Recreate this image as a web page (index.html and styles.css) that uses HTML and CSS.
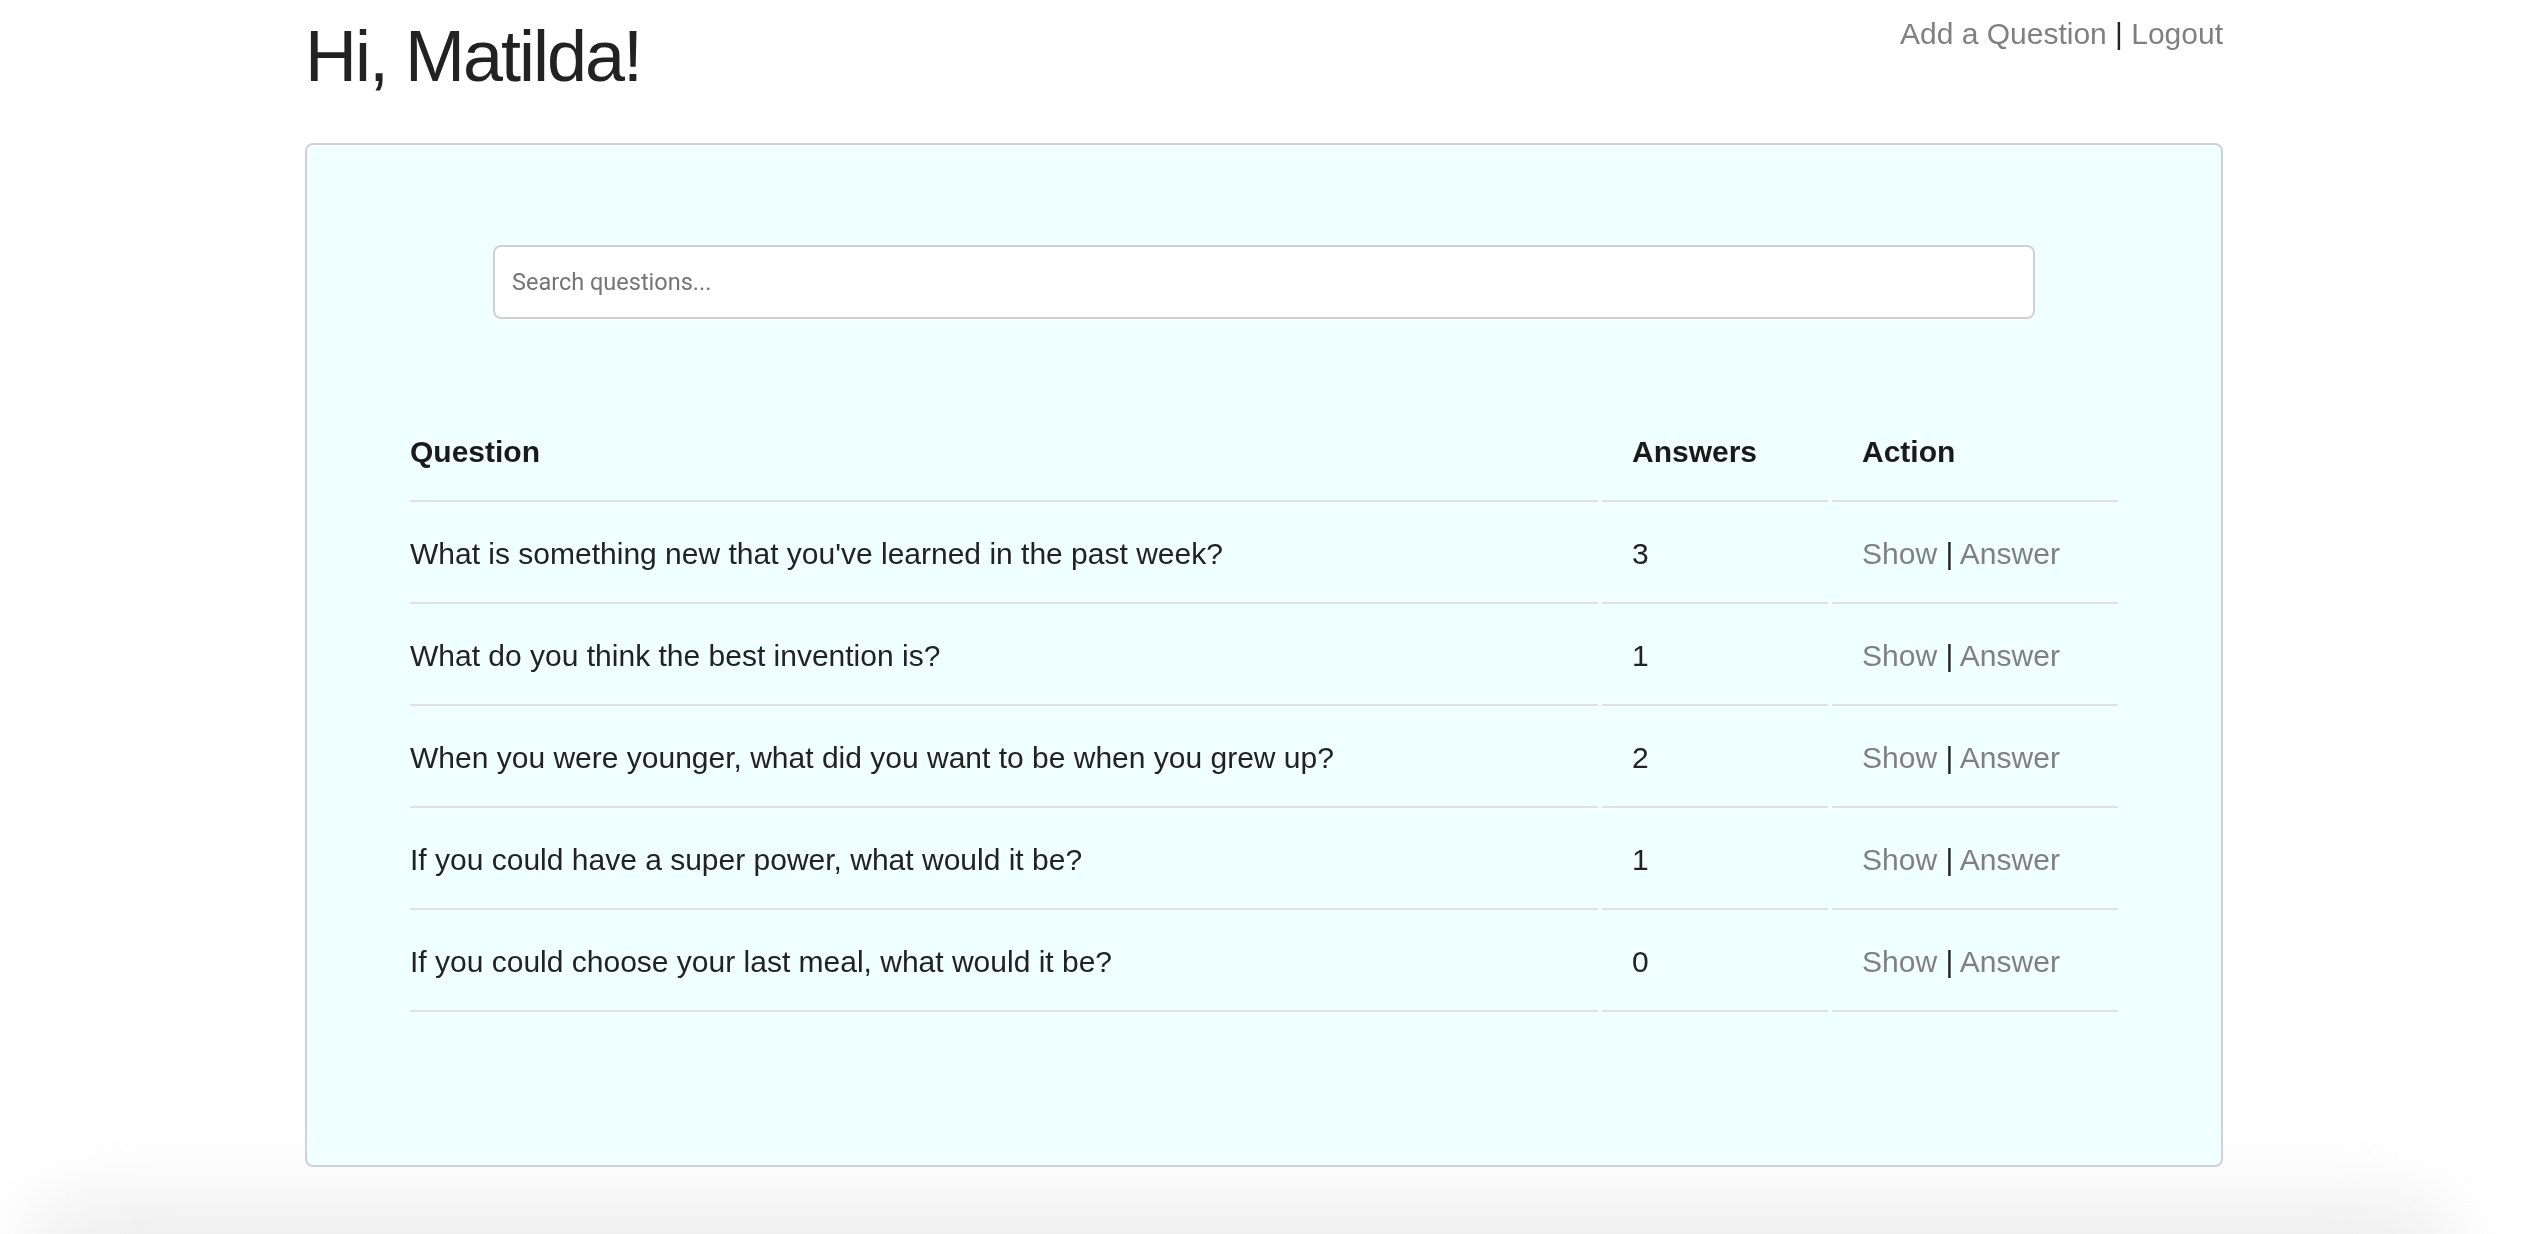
FILE: index.html
```html
<!DOCTYPE html>
<html lang="en">
<head>
<meta charset="utf-8">
<title>Questions</title>
<link rel="stylesheet" href="styles.css">
</head>
<body>
<div class="page">
  <header class="top">
    <h1 class="greeting">Hi, Matilda!</h1>
    <nav class="nav"><a href="#">Add a Question</a> | <a href="#">Logout</a></nav>
  </header>
  <main class="panel">
    <div class="search-wrap">
      <input class="search" type="text" placeholder="Search questions...">
    </div>
    <table class="questions">
      <thead>
        <tr>
          <th class="col-q">Question</th>
          <th class="col-a">Answers</th>
          <th class="col-act">Action</th>
        </tr>
      </thead>
      <tbody>
        <tr>
          <td>What is something new that you've learned in the past week?</td>
          <td>3</td>
          <td><a href="#">Show</a> | <a href="#">Answer</a></td>
        </tr>
        <tr>
          <td>What do you think the best invention is?</td>
          <td>1</td>
          <td><a href="#">Show</a> | <a href="#">Answer</a></td>
        </tr>
        <tr>
          <td>When you were younger, what did you want to be when you grew up?</td>
          <td>2</td>
          <td><a href="#">Show</a> | <a href="#">Answer</a></td>
        </tr>
        <tr>
          <td>If you could have a super power, what would it be?</td>
          <td>1</td>
          <td><a href="#">Show</a> | <a href="#">Answer</a></td>
        </tr>
        <tr>
          <td>If you could choose your last meal, what would it be?</td>
          <td>0</td>
          <td><a href="#">Show</a> | <a href="#">Answer</a></td>
        </tr>
      </tbody>
    </table>
  </main>
</div>
<div class="shade"></div>
</body>
</html>
```
FILE: styles.css
```css
html {
  margin: 0;
  padding: 0;
  background: #fff;
  height: 100%;
  overflow: hidden;
}
body {
  margin: 0;
  padding: 0;
  font-family: "Liberation Sans", Arial, Helvetica, sans-serif;
  font-size: 30px;
  line-height: 48px;
  color: #222;
}
.page {
  width: 1918px;
  margin-left: calc(50% - 956px);
}
.top {
  display: flex;
  justify-content: space-between;
  align-items: flex-start;
  padding-top: 10px;
}
.greeting {
  margin: 0;
  font-size: 72px;
  line-height: 1.3;
  font-weight: normal;
  letter-spacing: -2px;
  color: #222;
}
.nav {
  color: #222;
  font-size: 30px;
  line-height: 48px;
}
a {
  color: #808080;
  text-decoration: none;
}
.panel {
  margin-top: 39px;
  border: 2px solid #d1d1d1;
  border-radius: 8px;
  background: #f0ffff;
  padding: 100px 0 149px 0;
}
.search-wrap {
  margin: 0 186px;
}
.search {
  display: block;
  box-sizing: border-box;
  width: 100%;
  height: 74px;
  border: 2px solid #d1d1d1;
  border-radius: 8px;
  background: #fff;
  padding: 0 17px;
  font-family: Roboto, "Liberation Sans", sans-serif;
  font-size: 23.5px;
  color: #333;
  outline: none;
  margin: 0;
}
.search::placeholder {
  color: #757575;
}
.questions {
  margin: 81px auto 0 auto;
  width: 1716px;
  table-layout: fixed;
  border-collapse: separate;
  border-spacing: 4px;
}
.questions th,
.questions td {
  box-sizing: border-box;
  text-align: left;
  padding: 24px 30px;
  border-bottom: 2px solid #e1e1e1;
  line-height: 48px;
  font-size: 30px;
  vertical-align: top;
}
.questions th {
  font-weight: bold;
  color: #1a1a1a;
}
.questions th:first-child,
.questions td:first-child {
  padding-left: 0;
}
.questions th:last-child,
.questions td:last-child {
  padding-right: 0;
}
.col-q { width: 1188px; }
.col-a { width: 226px; }
.col-act { width: 286px; }
.shade {
  position: fixed;
  left: 30px;
  right: 70px;
  bottom: -70px;
  height: 100px;
  background: #ebebeb;
  border-radius: 80px;
  filter: blur(40px);
  z-index: -1;
}
```
